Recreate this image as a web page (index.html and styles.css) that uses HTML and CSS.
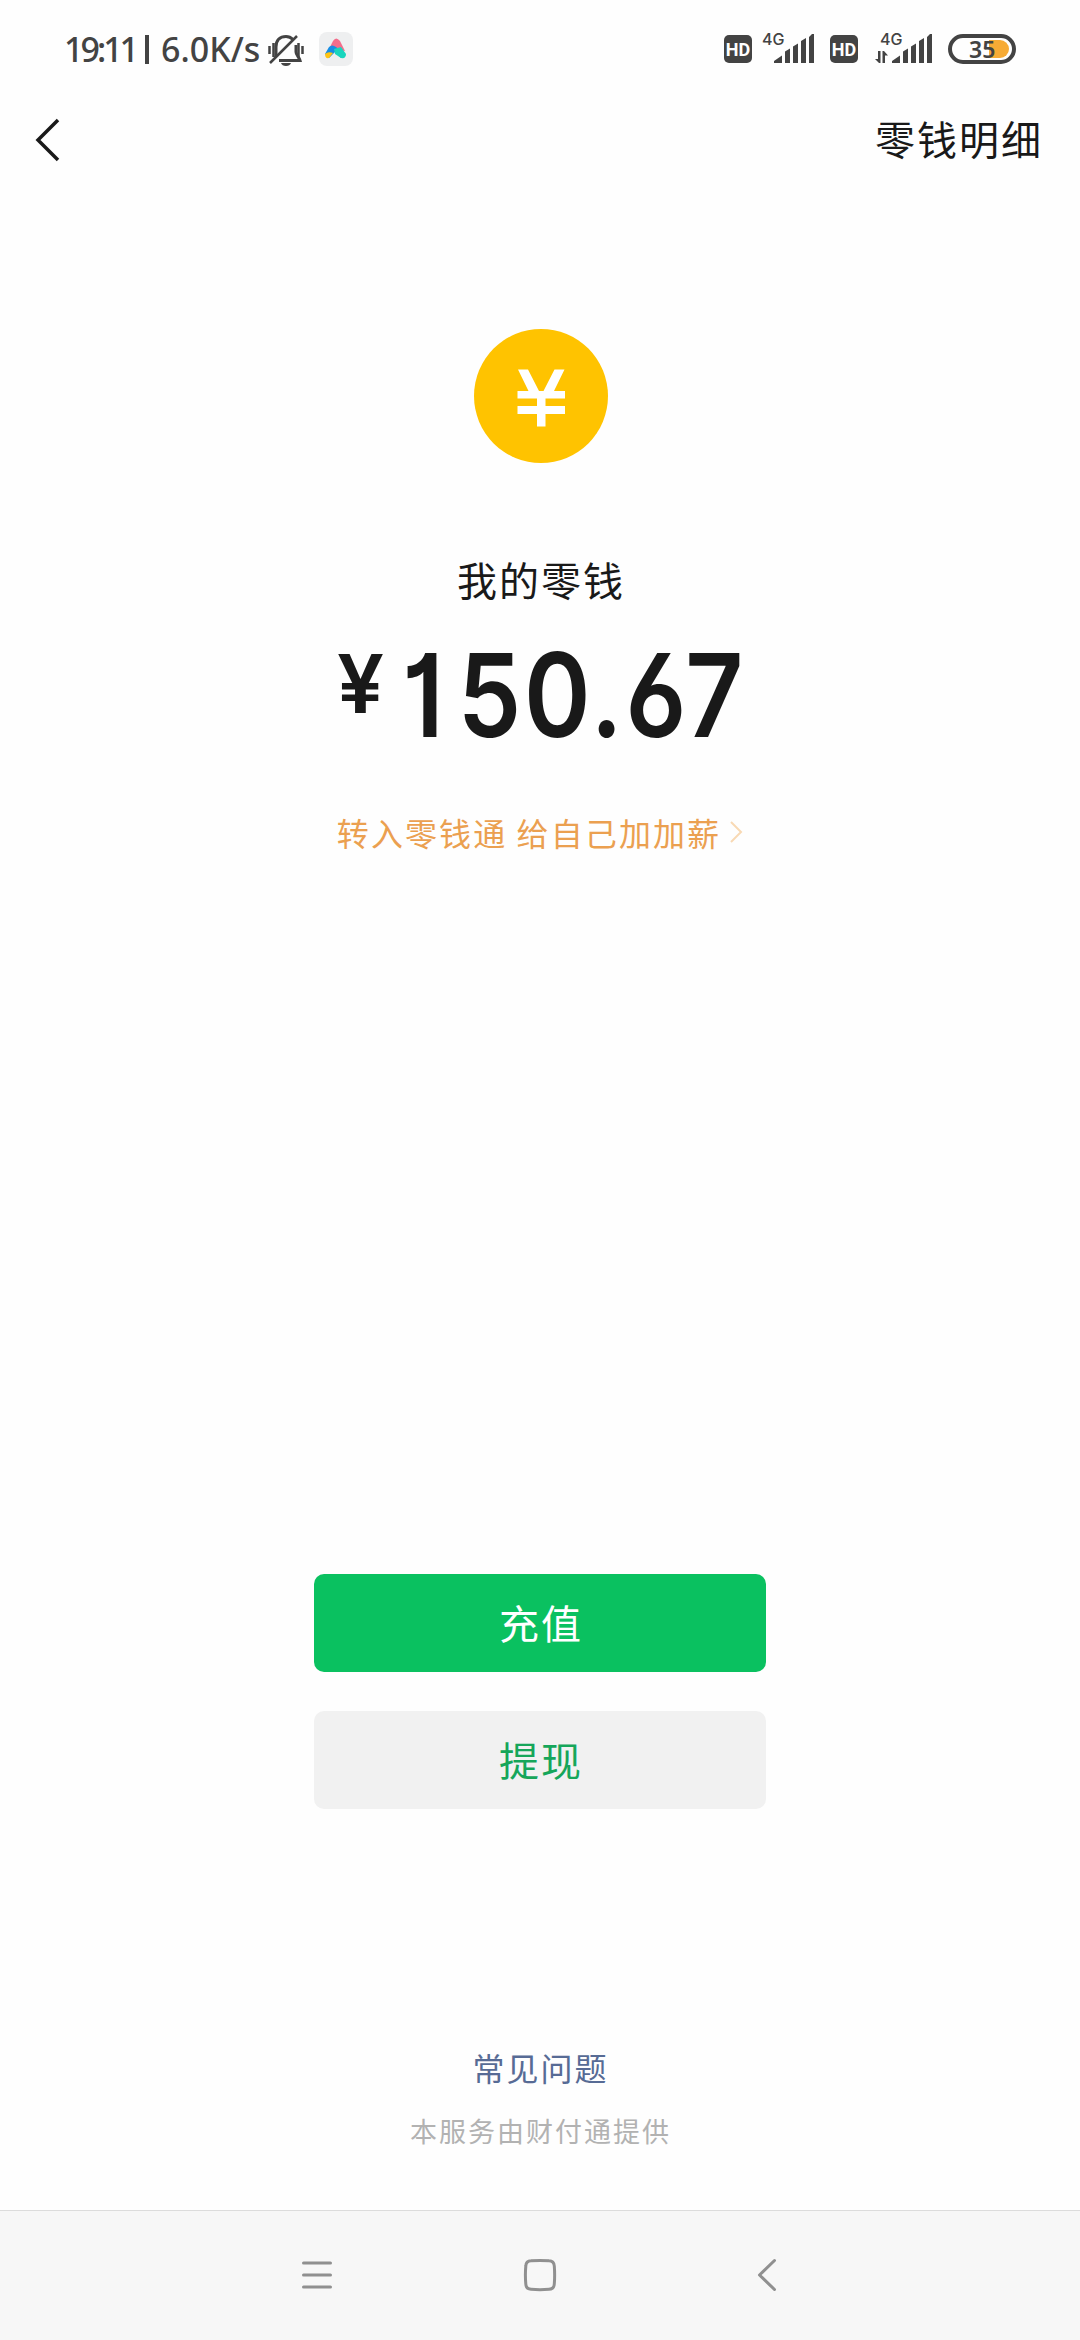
FILE: index.html
```html
<!DOCTYPE html>
<html lang="zh-CN">
<head>
<meta charset="utf-8">
<title>零钱</title>
<link rel="stylesheet" href="styles.css">
</head>
<body>
<header class="status">
  <div class="status-left">
    <span class="clock">19:11</span><span class="divider"></span><span class="speed">6.0K/s</span>
    <svg class="bell" width="36" height="36" viewBox="0 0 36 36" fill="none" stroke="#434343" stroke-width="3">
      <path d="M8 24V15C8 8 12 4.500 18 4.500C21 4.500 23 5.500 25 7.500M28 13V20C28 23 31 25 32 28.500H11"/>
      <path d="M2 31L29 4M1.500 14V22M5.500 11V25M30.500 11V25M34.500 14V22" stroke-width="2.500"/>
      <path d="M13 31H23Q22 34 18 34T13 31Z" fill="#434343" stroke="none"/>
    </svg>
    <svg class="app" width="34" height="34" viewBox="0 0 34 34">
      <rect width="34" height="34" rx="8" fill="#eeeff0"/>
      <path d="M10 17L14 9Q17 4 21 9L26 19Z" fill="#f36d8b"/>
      <path d="M6 22L10 15Q13 12 17 15L25 21L22 26L16 20L10 26Z" fill="#168de4"/>
      <path d="M15 17L22 15L27 22Q27 27 22 26L16 22Z" fill="#18d5bd"/>
      <path d="M6 22Q9 19 14 21L10 26Q6 27 6 22Z" fill="#ffc414"/>
    </svg>
  </div>
  <div class="status-right">
    <span class="hd">HD</span>
    <span class="signal first"><span class="net">4G</span>
      <svg width="58" height="32" viewBox="0 0 58 32" fill="#434343"><path d="M17 30V28L25 22.500V30ZM28 30V18.500L33 15.500V30ZM36 30V13.500L41 10.500V30ZM44 30V8L49 5V30ZM52 30V4L55 1H57V30Z"/></svg>
    </span>
    <span class="hd second">HD</span>
    <span class="signal"><span class="net">4G</span>
      <svg width="58" height="32" viewBox="0 0 58 32" fill="#434343"><path d="M17 30V28L25 22.500V30ZM28 30V18.500L33 15.500V30ZM36 30V13.500L41 10.500V30ZM44 30V8L49 5V30ZM52 30V4L55 1H57V30Z"/><path d="M3 18H5.500V30H4L0 26H3ZM7.500 30V18H9L13 22.500H10V30Z"/></svg>
    </span>
    <span class="battery"><span class="charge"></span><span class="percent">35</span></span>
  </div>
</header>
<nav class="topbar">
  <svg width="26" height="44" viewBox="0 0 26 44" fill="none" stroke="#191919" stroke-width="3.500"><path d="M23 2L3 22L23 42"/></svg>
  <a class="details">零钱明细</a>
</nav>
<main>
  <svg class="coin" width="134" height="134" viewBox="0 0 134 134">
    <circle cx="67" cy="67" r="67" fill="#ffc300"/>
    <path d="M44 40.500H54L65 62H69.500L80.500 40.500H90.500L80 62H91V69.500H71.500V77H91V85H71.500V97.500H63V85H43.500V77H63V69.500H43.500V62H54.500Z" fill="#fff"/>
  </svg>
  <h1>我的零钱</h1>
  <div class="amount"><span class="yen">¥</span><span class="number"><span class="lead">1</span>50.67</span></div>
  <a class="promo">转入零钱通 给自己加加薪<svg width="16" height="26" viewBox="0 0 16 26" fill="none" stroke="#f8d9b4" stroke-width="2"><path d="M2 3L12 13L2 23"/></svg></a>
  <div class="actions">
    <button class="primary">充值</button>
    <button class="secondary">提现</button>
  </div>
  <a class="faq">常见问题</a>
  <p class="provider">本服务由财付通提供</p>
</main>
<footer class="system">
  <svg width="34" height="34" viewBox="0 0 34 34" stroke="#909090" stroke-width="3" stroke-linecap="round"><path d="M3.500 5H30.500M3.500 17H30.500M3.500 29H30.500"/></svg>
  <svg class="home" width="34" height="34" viewBox="0 0 34 34" fill="none" stroke="#909090" stroke-width="3"><path d="M8 2.800Q17 2 26 2.800Q31 3 31.300 8Q32 17 31.300 26Q31 31 26 31.300Q17 32 8 31.300Q3 31 2.800 26Q2 17 2.800 8Q3 3 8 2.800Z"/></svg>
  <svg width="34" height="34" viewBox="0 0 34 34" fill="none" stroke="#909090" stroke-width="3" stroke-linecap="round" stroke-linejoin="round"><path d="M24.500 2.500L9.500 17L24.500 31.500"/></svg>
</footer>
</body>
</html>
```
FILE: styles.css
```css
* { box-sizing: border-box; }
body {
  margin: 0;
  width: 1080px;
  height: 2340px;
  display: flex;
  flex-direction: column;
  background: #fefefe;
  color: #191919;
  font-family: "Noto Sans CJK SC", sans-serif;
  overflow: hidden;
}
svg { display: block; flex: none; }
.status {
  height: 98px;
  display: flex;
  justify-content: space-between;
  padding: 0 64px 0 64px;
  color: #434343;
}
.status-left, .status-right { display: flex; align-items: center; }
.status-left {
  font: 500 34px/98px "Noto Sans", sans-serif;
}
.clock { width: 81px; letter-spacing: -3px; }
.divider { width: 4px; height: 29px; background: #434343; margin-right: 12px; }
.speed { width: 107px; }
.bell { margin-top: 2px; }
.app { margin-left: 15px; }
.hd {
  width: 28px;
  height: 28px;
  border-radius: 5px;
  background: #434343;
  color: #fff;
  font: 700 18px/29px Roboto, sans-serif;
  text-align: center;
}
.second { margin: 0 17px 0 15px; }
.signal { position: relative; }
.signal.first { margin-left: 5px; }
.net {
  position: absolute;
  left: 5px;
  top: -2px;
  font: 500 16px/16px Inter, sans-serif;
}
.battery {
  position: relative;
  width: 68px;
  height: 30px;
  border: 4px solid #434343;
  border-radius: 15px;
  margin-left: 15px;
}
.charge {
  position: absolute;
  right: 3px;
  top: 2px;
  width: 20px;
  height: 18px;
  border-radius: 0 9px 9px 0;
  background: #f7ab35;
}
.percent {
  position: absolute;
  left: 17px;
  top: 0;
  font: 600 23px/22px "Noto Sans", sans-serif;
}
.topbar {
  height: 84px;
  display: flex;
  align-items: center;
  justify-content: space-between;
  padding: 0 37px 0 35px;
}
.details { padding-bottom: 4px; }
.details, h1, .actions button { font-size: 40px; line-height: 60px; letter-spacing: 2px; }
main { flex: 1; display: flex; flex-direction: column; align-items: center; }
.coin { margin: 147px 0 0 2px; }
h1 { margin: 86px 0 0 2px; font-weight: 400; }
.amount {
  display: flex;
  align-items: flex-start;
  width: 406px;
  height: 84px;
  margin-top: 44px;
  font-family: Inter, sans-serif;
  font-weight: 600;
}
.yen { flex: none; width: 63px; font-size: 81px; line-height: 62px; transform: scaleX(1.03); transform-origin: left; }
.number {
  flex: none;
  margin-left: 2px;
  font-size: 116px;
  line-height: 84px;
  letter-spacing: 3.2px;
  font-feature-settings: "cv03", "cv01";
  transform: scaleX(.87);
  transform-origin: left;
}
.lead { letter-spacing: 16px; }
.promo {
  display: flex;
  align-items: center;
  gap: 8px;
  height: 48px;
  margin: 71px 0 0 2px;
  font-size: 32px;
  letter-spacing: 2.1px;
  color: #eba050;
}
.actions { display: flex; flex-direction: column; gap: 39px; margin-top: 718px; }
.actions button {
  width: 452px;
  height: 98px;
  padding: 0 0 3px 2px;
  border: 0;
  border-radius: 10px;
  font-family: inherit;
}
.primary { background: #0ac160; color: #fff; }
.secondary { background: #f1f1f1; color: #16a65a; }
.faq { margin: 234px 0 0 1px; font-size: 32px; line-height: 48px; letter-spacing: 2px; color: #576b95; }
.provider { margin: 20px 0 0 1px; font-size: 27px; line-height: 40px; letter-spacing: 2px; color: #b2b2b2; }
.system {
  height: 130px;
  border-top: 1px solid #dcdcdc;
  background: #f7f7f7;
  display: flex;
  align-items: center;
  justify-content: space-between;
  padding: 0 296px 2px 300px;
}
.home { margin: 0 2px 0 -2px; }
```
